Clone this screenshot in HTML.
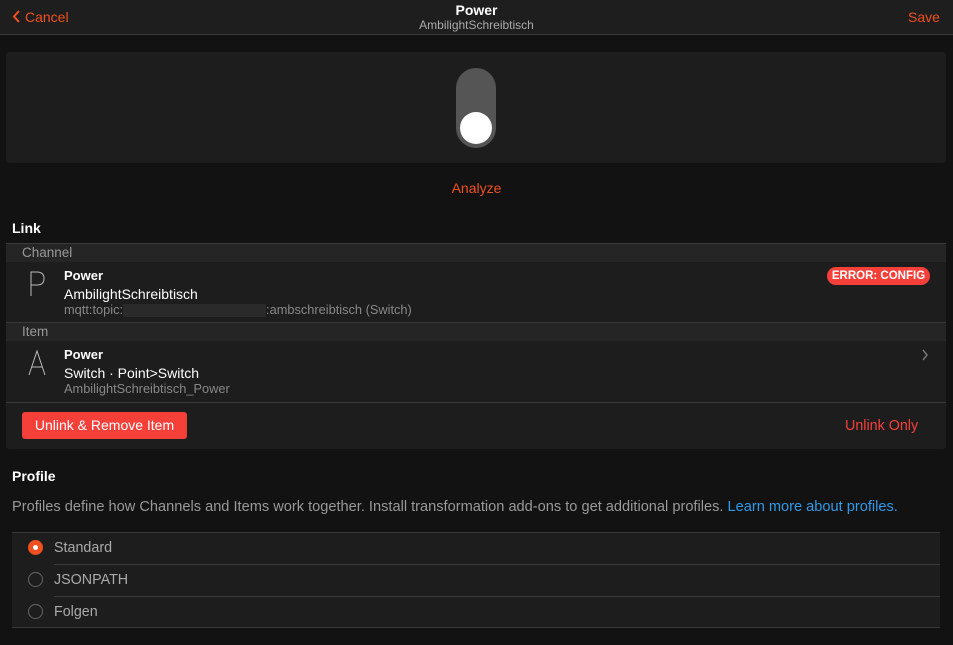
<!DOCTYPE html>
<html><head><style>
*{margin:0;padding:0;box-sizing:border-box}
body{width:953px;height:645px;background:#121212;font-family:"Liberation Sans",sans-serif;color:#fff;position:relative;overflow:hidden}
.a{position:absolute;white-space:nowrap}
</style></head><body>
<div class="a" style="left:0;top:0;width:953px;height:35px;background:#1e1e1e;border-bottom:1px solid #3a3a3a"></div>
<svg class="a" style="left:12px;top:9px" width="10" height="15"><path d="M7 2 L2 7.5 L7 13" stroke="#f0501e" stroke-width="2" fill="none"/></svg>
<div class="a" style="left:25px;top:9px;font-size:14px;color:#f0501e">Cancel</div>
<div class="a" style="left:0;width:953px;text-align:center;top:2px;font-size:14px;font-weight:bold">Power</div>
<div class="a" style="left:0;width:953px;text-align:center;top:18px;font-size:12px;color:#aaa">AmbilightSchreibtisch</div>
<div class="a" style="left:908px;top:9px;font-size:14px;color:#f0501e">Save</div>

<div class="a" style="left:6px;top:52px;width:940px;height:111px;background:#1d1d1d;border-radius:3px"></div>
<div class="a" style="left:456px;top:68px;width:40px;height:80px;background:#555;border-radius:20px"></div>
<div class="a" style="left:460px;top:112px;width:32px;height:32px;background:#fff;border-radius:50%"></div>
<div class="a" style="left:0;width:953px;text-align:center;top:180px;font-size:14px;color:#f0501e">Analyze</div>

<div class="a" style="left:12px;top:220px;font-size:14px;font-weight:bold">Link</div>
<div class="a" style="left:6px;top:243px;width:940px;height:206px;background:#1d1d1d;border-top:1px solid #3a3a3a;border-radius:0 0 3px 3px"></div>
<div class="a" style="left:6px;top:244px;width:940px;height:18px;background:#252525"></div>
<div class="a" style="left:22px;top:245px;font-size:13.5px;color:#999">Channel</div>
<svg class="a" style="left:26px;top:270px" width="24" height="30"><path d="M5 26 V2 H11 Q18 2 18 8.5 Q18 15 11 15 H5" stroke="#bbb" stroke-width="1" fill="none"/></svg>
<div class="a" style="left:64px;top:268px;font-size:13px;font-weight:bold">Power</div>
<div class="a" style="left:64px;top:286px;font-size:14px">AmbilightSchreibtisch</div>
<div class="a" style="left:64px;top:302px;font-size:12.8px;color:#888">mqtt:topic:<span style="display:inline-block;width:143px;height:13px;background:#2a2a2a;vertical-align:middle"></span>:ambschreibtisch (Switch)</div>
<div class="a" style="left:827px;top:267px;width:103px;height:18px;background:#f5403a;border-radius:9px;font-size:11.5px;font-weight:bold;text-align:center;line-height:18px">ERROR: CONFIG</div>
<div class="a" style="left:6px;top:322px;width:940px;height:19px;background:#252525;border-top:1px solid #3a3a3a"></div>
<div class="a" style="left:22px;top:324px;font-size:13.5px;color:#999">Item</div>
<svg class="a" style="left:26px;top:349px" width="24" height="30"><path d="M3 26 L11 2 L19 26 M5.7 18 H16.3" stroke="#bbb" stroke-width="1" fill="none"/></svg>
<div class="a" style="left:64px;top:347px;font-size:13px;font-weight:bold">Power</div>
<div class="a" style="left:64px;top:365px;font-size:14px">Switch · Point&gt;Switch</div>
<div class="a" style="left:64px;top:381px;font-size:12.8px;color:#888">AmbilightSchreibtisch_Power</div>
<svg class="a" style="left:921px;top:349px" width="8" height="12"><path d="M2 1 L6 6 L2 11" stroke="#777" stroke-width="1.5" fill="none"/></svg>
<div class="a" style="left:6px;top:402px;width:940px;height:1px;background:#3a3a3a"></div>
<div class="a" style="left:22px;top:412px;width:165px;height:27px;background:#f5403a;border-radius:3px;font-size:14px;text-align:center;line-height:27px">Unlink &amp; Remove Item</div>
<div class="a" style="left:845px;top:418px;font-size:14.3px;color:#f5403a">Unlink Only</div>

<div class="a" style="left:12px;top:468px;font-size:14px;font-weight:bold">Profile</div>
<div class="a" style="left:12px;top:499px;font-size:14.6px;color:#999">Profiles define how Channels and Items work together. Install transformation add-ons to get additional profiles. <span style="color:#2f9ae8">Learn more about profiles.</span></div>
<div class="a" style="left:12px;top:532px;width:928px;height:96px;background:#1d1d1d;border-top:1px solid #3a3a3a;border-bottom:1px solid #3a3a3a"></div>
<div class="a" style="left:54px;top:564px;width:886px;height:1px;background:#3a3a3a"></div>
<div class="a" style="left:54px;top:596px;width:886px;height:1px;background:#3a3a3a"></div>
<div class="a" style="left:28px;top:540px;width:15px;height:15px;border-radius:50%;background:#f0501e"></div>
<div class="a" style="left:33px;top:545px;width:5px;height:5px;border-radius:50%;background:#fff"></div>
<div class="a" style="left:28px;top:572px;width:15px;height:15px;border-radius:50%;border:1px solid #666"></div>
<div class="a" style="left:28px;top:604px;width:15px;height:15px;border-radius:50%;border:1px solid #666"></div>
<div class="a" style="left:54px;top:540px;font-size:14.3px;color:#aaa">Standard</div>
<div class="a" style="left:54px;top:572px;font-size:14.3px;color:#aaa">JSONPATH</div>
<div class="a" style="left:54px;top:604px;font-size:14.3px;color:#aaa">Folgen</div>
</body></html>
